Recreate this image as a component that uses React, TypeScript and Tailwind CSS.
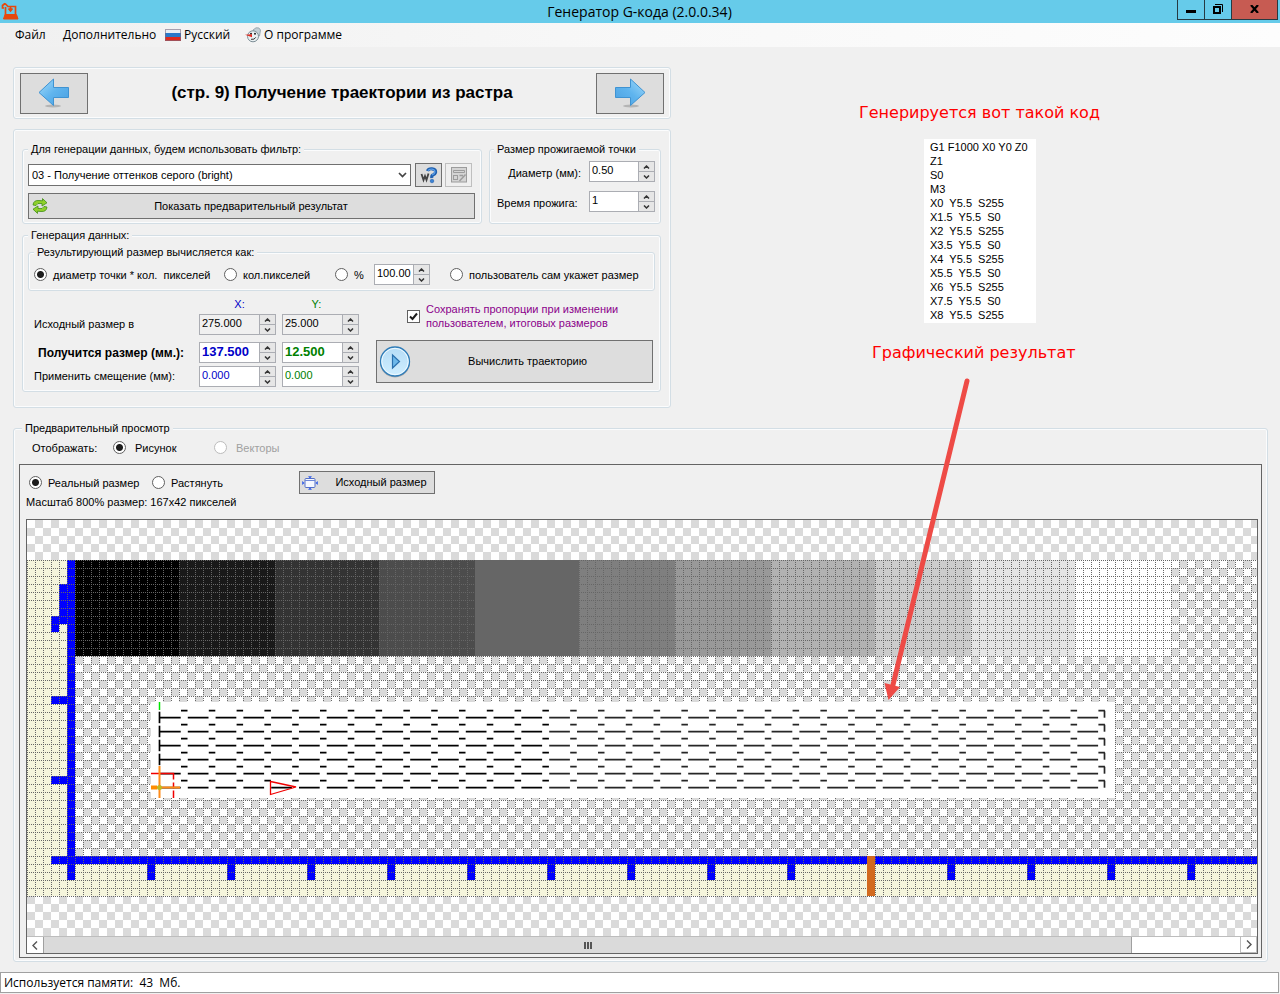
import { useId, useState } from 'react';
import type { ReactNode } from 'react';
import clsx from 'clsx';

const CODE_LINES = [
  'G1 F1000 X0 Y0 Z0',
  'Z1',
  'S0',
  'M3',
  'X0  Y5.5  S255',
  'X1.5  Y5.5  S0',
  'X2  Y5.5  S255',
  'X3.5  Y5.5  S0',
  'X4  Y5.5  S255',
  'X5.5  Y5.5  S0',
  'X6  Y5.5  S255',
  'X7.5  Y5.5  S0',
  'X8  Y5.5  S255',
];

// x, width, fill of each raster band
const BANDS: [number, number, string][] = [
  [48, 104, '#000000'],
  [152, 96, '#191919'],
  [248, 104, '#333333'],
  [352, 96, '#4c4c4c'],
  [448, 104, '#666666'],
  [552, 96, '#7f7f7f'],
  [648, 96, '#999999'],
  [744, 104, '#b2b2b2'],
  [848, 96, '#cccccc'],
  [944, 104, '#e5e5e5'],
  [1048, 96, '#ffffff'],
];

const BUTTON = 'border border-[#707070] bg-[#dddddd] hover:bg-[#e5f1fb]';

function GroupBox({
  title,
  className,
  legendClass = 'ml-[5px]',
  children,
}: {
  title: string;
  className?: string;
  legendClass?: string;
  children: ReactNode;
}) {
  return (
    <fieldset
      className={clsx(
        'min-w-0 rounded-[3px] border border-[#d3dee5] shadow-[inset_0_0_0_1px_#fbfcfd]',
        className,
      )}
    >
      <legend className={clsx('bg-[#f0f0f0] px-[3px] leading-[14px]', legendClass)}>{title}</legend>
      {children}
    </fieldset>
  );
}

function Spin({
  label,
  value,
  className,
  inputClass = 'bg-white',
}: {
  label: string;
  value: string;
  className?: string;
  inputClass?: string;
}) {
  const [text, setText] = useState(value);
  const decimals = value.split('.')[1]?.length ?? 0;
  const step = (delta: number) => setText((Number(text) + delta).toFixed(decimals));

  return (
    <div className={clsx('flex h-[21px] border border-[#abadb3]', className)}>
      <input
        type="text"
        aria-label={label}
        value={text}
        onChange={(e) => setText(e.target.value)}
        className={clsx('w-0 min-w-0 flex-1 pb-[2px] pl-[2px] outline-none', inputClass)}
      />
      <div className="flex w-4 flex-col bg-[#abadb3] pl-px">
        <button
          aria-label={`${label}: больше`}
          onClick={() => step(1)}
          className="flex flex-1 items-center justify-center border-b border-[#abadb3] bg-[#e6e6e6]"
        >
          <svg width="7" height="4" viewBox="0 0 7 4" fill="none" stroke="#333" strokeWidth="1.5">
            <path d="M1 3.5 3.5 1 6 3.5" />
          </svg>
        </button>
        <button
          aria-label={`${label}: меньше`}
          onClick={() => step(-1)}
          className="flex flex-1 items-center justify-center bg-[#e6e6e6]"
        >
          <svg width="7" height="4" viewBox="0 0 7 4" fill="none" stroke="#333" strokeWidth="1.5">
            <path d="M1 .5 3.5 3 6 .5" />
          </svg>
        </button>
      </div>
    </div>
  );
}

function Radio({
  name,
  label,
  checked,
  disabled,
  className,
  labelClass = 'pl-[6px]',
}: {
  name: string;
  label: string;
  checked?: boolean;
  disabled?: boolean;
  className?: string;
  labelClass?: string;
}) {
  const id = useId();
  return (
    <div className={clsx('flex shrink-0 items-center', className)}>
      <input
        id={id}
        type="radio"
        name={name}
        defaultChecked={checked}
        disabled={disabled}
        className="h-[13px] w-[13px] shrink-0 appearance-none rounded-full border border-[#606060] bg-white checked:bg-[radial-gradient(circle,#1c1c1c_0_3px,#ffffff_4px)] disabled:border-[#bcbcbc]"
      />
      <label
        htmlFor={id}
        className={clsx('pt-px whitespace-pre', labelClass, disabled && 'text-[#a0a0a0]')}
      >
        {label}
      </label>
    </div>
  );
}

function AppIcon() {
  return (
    <svg width="18" height="18" viewBox="0 0 18 18" fill="none" stroke="#e8480c">
      <path d="M3 6H1.5V3.5L4 1.5M4 1.5 7 4.5H14.500V12M4.500 5V13" strokeWidth="1.7" />
      <path d="M9.500 4V9M7.500 6.500l2 2.500 2-2.500" strokeWidth="1.700" />
      <path d="M4 12.500H15.500L17 17H2.500Z" fill="#e8480c" />
    </svg>
  );
}

function FlagIcon() {
  return (
    <svg width="16" height="12" viewBox="0 0 16 12">
      <rect width="16" height="4" fill="#e9eef3" />
      <rect y="4" width="16" height="4" fill="#2a78c8" />
      <rect y="8" width="16" height="4" fill="#dd2a1e" />
      <rect x=".5" y=".5" width="15" height="11" fill="none" stroke="#7a6a80" strokeOpacity=".6" />
    </svg>
  );
}

function SnowmanIcon() {
  return (
    <svg width="16" height="16" viewBox="0 0 16 16">
      <path d="M8 3 11 .8Q14.500 0 15.500 3L14.500 9 12 9Z" fill="#c3d0d6" stroke="#8b9ba3" strokeWidth=".8" />
      <circle cx="8" cy="9.300" r="5.500" fill="#eaf0f2" stroke="#7d8e96" />
      <circle cx="6" cy="6.800" r="1" fill="#222" />
      <circle cx="10" cy="6.800" r="1" fill="#222" />
      <path d="M0 7.700 7 7.300V10.300Z" fill="#e02a20" />
      <path d="M6 12.300Q9.500 13 10.800 10.300" fill="none" stroke="#333" />
    </svg>
  );
}

function BigArrow({ flip }: { flip?: boolean }) {
  return (
    <svg width="32" height="30" viewBox="0 0 32 30" className={flip ? '-scale-x-100' : undefined}>
      <defs>
        <linearGradient id="arrowFill" x1="0" y1="0" x2="1" y2="1">
          <stop offset="0" stopColor="#a5dcfa" />
          <stop offset=".5" stopColor="#5fb4ee" />
          <stop offset="1" stopColor="#4a9fe0" />
        </linearGradient>
      </defs>
      <ellipse cx="15" cy="28" rx="8" ry="1.500" fill="#b4b4b4" />
      <path
        d="M1 14.500 15.500 1V9.500H30.500V19.500H15.500V27.500Z"
        fill="url(#arrowFill)"
        stroke="#3f93d2"
        strokeLinejoin="round"
      />
    </svg>
  );
}

function RefreshIcon() {
  return (
    <svg width="16" height="16" viewBox="0 0 16 16" fill="#8fd02a" stroke="#3f8f14" strokeWidth=".8">
      <path d="M1 7Q1.500 2 7 2.500L10.500 2.800V.6L15 4.800 10 8V5.500Q5 4.500 4 7.500Z" />
      <path d="M15 9Q14.500 14 9 13.500L5.500 13.200V15.400L1 11.200 6 8V10.500Q11 11.500 12 8.500Z" />
    </svg>
  );
}

function HelpIcon() {
  return (
    <svg width="18" height="17" viewBox="0 0 18 17" fill="none">
      <path d="M1.500 7 3.500 13 5 9 6.500 13 8.500 6.500" stroke="#444" strokeWidth="1.800" />
      <path
        d="M7.500 4Q8.500 1.500 12 1.800 16 2.200 15.500 5.500 15 7.500 12.500 8.200 11.500 8.800 11.800 11"
        stroke="#1f5fae"
        strokeWidth="3.200"
      />
      <path
        d="M8 3.800Q9 1.900 12 2.200 15.200 2.600 14.900 5.300 14.500 7 12 8"
        stroke="#5fa2ea"
        strokeWidth="1.200"
      />
      <circle cx="12" cy="14" r="1.800" fill="#3c82d4" stroke="#1f5fae" strokeWidth=".6" />
    </svg>
  );
}

function FormIcon() {
  return (
    <svg width="16" height="16" viewBox="0 0 16 16" fill="none" stroke="#9c9c9c">
      <rect x=".5" y=".5" width="15" height="14.500" fill="#d4d4d4" />
      <path d="M2.500 3.500H13.500V5.500H2.500Z" />
      <rect x="2.500" y="8.500" width="4" height="4" />
      <path d="M8.500 8.500H12M8.500 14 14.500 7.500" strokeWidth="1.500" />
    </svg>
  );
}

function PlayIcon() {
  return (
    <svg width="32" height="32" viewBox="0 0 32 32">
      <defs>
        <linearGradient id="playFill" x1="0" y1="0" x2="0" y2="1">
          <stop offset="0" stopColor="#b5dcf6" />
          <stop offset="1" stopColor="#cfeeff" />
        </linearGradient>
      </defs>
      <circle cx="16" cy="16.500" r="15" fill="#a9a9a9" />
      <circle cx="16" cy="15.500" r="14.500" fill="url(#playFill)" stroke="#2f7cb8" strokeWidth="1.300" />
      <circle cx="16" cy="15.500" r="13.200" fill="none" stroke="#eef9ff" />
      <path d="M13.500 9 20.500 15.500 13.500 22Z" fill="#6db8ea" stroke="#2a70ae" strokeWidth="1.200" />
    </svg>
  );
}

function FitIcon() {
  return (
    <svg width="16" height="14" viewBox="0 0 16 14">
      <rect x="3" y="2.500" width="10" height="9" rx="1" fill="#f4f7ff" stroke="#5470c8" />
      <path d="M3 4.500H13" stroke="#6e88d8" />
      <path
        d="M8 2.500 6 .3H10ZM8 11.500 6 13.700H10ZM2.500 7 .2 5V9ZM13.500 7 15.800 5V9Z"
        fill="#2f5bea"
      />
    </svg>
  );
}

function Toolpath() {
  const columns = Array.from({ length: 34 }, (_, i) => i);
  const rows = [0, 1, 2, 3, 4, 5];
  return (
    <g fill="none">
      <rect x="124" y="182" width="964" height="96" fill="#fff" />
      {rows.map((row) => {
        const y = 190.7 + row * 14;
        return (
          <g key={row} strokeWidth="1.7">
            {columns.map((col) => {
              const x = 133 + col * 27.8;
              const stroke = col < 14 ? '#000' : '#262626';
              return (
                <path
                  key={col}
                  stroke={stroke}
                  d={`M${x + 21} ${y}h6.500M${x} ${y + 7}h20.700`}
                />
              );
            })}
            <path stroke="#262626" d={`M1077.500 ${y}v7`} />
            {row < 4 && <path stroke="#000" d={`M132.500 ${y + 1}v11.500`} />}
          </g>
        );
      })}
      <path stroke="#00e400" strokeWidth="1.500" d="M132.500 182v8" />
      <path stroke="#f00000" strokeWidth="1.500" d="M124 253.500h22.500v6m0 3v6m0 2v7.500" />
      <path stroke="#ff8c1a" strokeWidth="2" d="M132.500 246v32M124 267.500h29" />
      <path stroke="#ff8c00" strokeWidth="4" d="M124 267.500h6" />
      <circle cx="132.500" cy="267.500" r="2.500" fill="#c0b820" />
      <path stroke="#f00000" strokeWidth="1.300" d="M243.500 261.500 269 267 243.500 274.500Z" />
    </g>
  );
}

function Raster() {
  return (
    <svg width="100%" height="416" className="block">
      <defs>
        <pattern id="checker" width="16" height="16" patternUnits="userSpaceOnUse">
          <rect width="16" height="16" fill="#fff" />
          <path d="M8 0h8v8h-8zM0 8h8v8H0z" fill="#dadada" />
        </pattern>
        <pattern id="dots" width="8" height="8" patternUnits="userSpaceOnUse">
          <path
            d="M0 0h1v1H0zM2 0h1v1H2zM4 0h1v1H4zM6 0h1v1H6zM0 2h1v1H0zM0 4h1v1H0zM0 6h1v1H0z"
            fill="#666"
          />
        </pattern>
      </defs>
      <rect width="100%" height="416" fill="url(#checker)" />
      <rect y="40" width="40" height="336" fill="#f5f5dc" />
      <rect y="344" width="100%" height="32" fill="#f5f5dc" />
      {BANDS.map(([x, width, fill]) => (
        <rect key={x} x={x} y="40" width={width} height="96" fill={fill} />
      ))}
      <g fill="#0000ff">
        <path d="M40 40h8v320h-8zM32 64h8v40h-8zM24 96h8v16h-8zM24 176h16v8H24zM24 256h16v8H24z" />
        <rect x="24" y="336" width="100%" height="8" />
        {Array.from({ length: 30 }, (_, i) => (
          <rect key={i} x={120 + i * 80} y="344" width="8" height="16" />
        ))}
      </g>
      <rect y="40" width="100%" height="337" fill="url(#dots)" />
      <rect x="840" y="336" width="8" height="40" fill="#d2691e" />
      <Toolpath />
    </svg>
  );
}

function TitleBar() {
  return (
    <header className="flex h-[23px] shrink-0 items-start bg-[#66cbea]">
      <div className="flex w-[102px] pt-[2px] pl-px">
        <AppIcon />
      </div>
      <h1 className="flex-1 text-center font-['Open_Sans','Noto_Sans',sans-serif] text-[14px] leading-[23px]">
        Генератор G-кода (2.0.0.34)
      </h1>
      <div className="mr-[2px] flex h-5 border-b border-l border-[#263a42]">
        <button aria-label="Свернуть" className="flex w-[26px] justify-center pt-[10px]">
          <svg width="10" height="3">
            <rect width="10" height="3" />
          </svg>
        </button>
        <button
          aria-label="Восстановить"
          className="flex w-[27px] justify-center border-l border-[#263a42] pt-1"
        >
          <svg width="10" height="10" fill="none" stroke="#000">
            <rect x="1" y="3" width="6" height="6" strokeWidth="2" />
            <path d="M2 .5H9.500V8" />
          </svg>
        </button>
        <button
          aria-label="Закрыть"
          className="flex w-[47px] justify-center border-x border-[#263a42] bg-[#c75b52] pt-[5px]"
        >
          <svg width="9" height="8" viewBox="0 0 9 8" stroke="#000" strokeWidth="2.200">
            <path d="M1 0 8 8M8 0 1 8" />
          </svg>
        </button>
      </div>
    </header>
  );
}

function MenuBar() {
  return (
    <nav className="flex h-6 shrink-0 items-center bg-linear-to-r from-[#f0f0f0] via-[#f8f8f8] to-[#fdfdfd] pl-[15px] font-['Open_Sans','Noto_Sans',sans-serif] text-[12px]">
      <button className="w-12 text-left">Файл</button>
      <button className="w-[102px] text-left">Дополнительно</button>
      <button className="flex w-20 items-center gap-[3px]">
        <FlagIcon />
        Русский
      </button>
      <button className="flex items-center gap-[3px]">
        <SnowmanIcon />
        О программе
      </button>
    </nav>
  );
}

function PageHeader() {
  return (
    <div className="flex h-[52px] items-center justify-between rounded-[3px] border border-[#d3dee5] px-[6px] shadow-[inset_0_0_0_1px_#fbfcfd]">
      <button
        aria-label="Назад"
        className={clsx('flex h-[41px] w-[68px] items-center justify-center', BUTTON)}
      >
        <BigArrow />
      </button>
      <h2 className="text-[17px] font-bold">(стр. 9) Получение траектории из растра</h2>
      <button
        aria-label="Вперёд"
        className={clsx('flex h-[41px] w-[68px] items-center justify-center', BUTTON)}
      >
        <BigArrow flip />
      </button>
    </div>
  );
}

function FilterBox() {
  return (
    <GroupBox title="Для генерации данных, будем использовать фильтр:" className="flex-1 pb-1">
      <div className="flex items-center pt-[7px] pr-[9px] pl-[5px]">
        <div className="relative flex-1">
          <select
            aria-label="Фильтр"
            className="block h-[22px] w-full appearance-none border border-[#707070] bg-white pl-[3px]"
          >
            <option>03 - Получение оттенков серого (bright)</option>
          </select>
          <svg
            className="pointer-events-none absolute top-2 right-1"
            width="9"
            height="6"
            fill="none"
            stroke="#444"
            strokeWidth="1.700"
          >
            <path d="M1 1 4.500 4.500 8 1" />
          </svg>
        </div>
        <button
          aria-label="Справка по фильтру"
          className={clsx('ml-1 flex h-6 w-[27px] items-center justify-center', BUTTON)}
        >
          <HelpIcon />
        </button>
        <button
          aria-label="Настройки фильтра"
          disabled
          className="ml-[3px] flex h-6 w-[27px] items-center justify-center border border-[#bfbfbf] bg-[#efefef]"
        >
          <FormIcon />
        </button>
      </div>
      <div className="mt-[6px] flex pr-[6px] pl-[5px]">
        <button className={clsx('flex h-[26px] flex-1 items-center pl-[3px]', BUTTON)}>
          <RefreshIcon />
          <span className="flex-1 pr-5 text-center">Показать предварительный результат</span>
        </button>
      </div>
    </GroupBox>
  );
}

function DotBox() {
  return (
    <GroupBox
      title="Размер прожигаемой точки"
      className="w-[172px] pr-[5px]"
      legendClass="ml-1"
    >
      <div className="flex items-center justify-end gap-2 pt-[5px]">
        <span className="pt-1">Диаметр (мм):</span>
        <Spin label="Диаметр (мм)" value="0.50" className="w-[66px]" />
      </div>
      <div className="flex items-center justify-between pt-[9px] pl-[7px]">
        <span className="pt-1">Время прожига:</span>
        <Spin label="Время прожига" value="1" className="w-[66px]" />
      </div>
    </GroupBox>
  );
}

function SizeGrid() {
  return (
    <div className="w-[325px] pt-[6px]">
      <div className="grid grid-cols-[159px_77px_77px] gap-x-[6px] leading-[14px]">
        <span />
        <span className="pl-1 text-center text-[#0000c8]">X:</span>
        <span className="pr-2 text-center text-[#008000]">Y:</span>
      </div>
      <div className="mt-[3px] grid grid-cols-[159px_77px_77px] items-center gap-x-[6px]">
        <span>Исходный размер в</span>
        <Spin label="Исходный размер X" value="275.000" inputClass="bg-[#f0f0f0]" />
        <Spin label="Исходный размер Y" value="25.000" inputClass="bg-[#f0f0f0]" />
      </div>
      <div className="mt-[7px] grid grid-cols-[159px_77px_77px] items-center gap-x-[6px]">
        <span className="pl-1 text-[12px] font-bold whitespace-nowrap">Получится размер (мм.):</span>
        <Spin
          label="Размер X"
          value="137.500"
          inputClass="bg-white text-[13px] font-bold text-[#0000c8]"
        />
        <Spin
          label="Размер Y"
          value="12.500"
          inputClass="bg-white text-[13px] font-bold text-[#008000]"
        />
      </div>
      <div className="mt-[3px] grid grid-cols-[159px_77px_77px] items-center gap-x-[6px]">
        <span>Применить смещение (мм):</span>
        <Spin label="Смещение X" value="0.000" inputClass="bg-white text-[#0000c8]" />
        <Spin label="Смещение Y" value="0.000" inputClass="bg-white text-[#008000]" />
      </div>
    </div>
  );
}

function GenerationBox() {
  return (
    <GroupBox title="Генерация данных:" className="px-[5px] pt-[3px] pb-1" legendClass="ml-0">
      <GroupBox
        title="Результирующий размер вычисляется как:"
        className="pt-[5px] pb-[5px] pl-[5px]"
        legendClass="ml-0"
      >
        <div className="flex items-center">
          <Radio
            name="calc"
            label="диаметр точки * кол.  пикселей"
            checked
            className="w-[190px]"
          />
          <Radio name="calc" label="кол.пикселей" className="w-[111px]" />
          <Radio name="calc" label="%" className="w-[39px]" />
          <Spin label="Процент" value="100.00" className="w-[56px]" />
          <Radio name="calc" label="пользователь сам укажет размер" className="ml-5" />
        </div>
      </GroupBox>
      <div className="flex gap-[17px] pl-[6px]">
        <SizeGrid />
        <div className="flex flex-1 flex-col pt-[11px] pr-[2px]">
          <div className="flex items-center pl-[31px] leading-[14px] text-[#8b008b]">
            <span className="relative h-[13px] w-[13px]">
              <input
                id="keep-ratio"
                type="checkbox"
                defaultChecked
                className="peer block h-[13px] w-[13px] appearance-none border border-[#606060] bg-white"
              />
              <svg
                className="pointer-events-none absolute inset-0 hidden peer-checked:block"
                width="13"
                height="13"
                fill="none"
                stroke="#1c1c1c"
                strokeWidth="2"
              >
                <path d="M3 6.500 5.500 9 10 3.500" />
              </svg>
            </span>
            <label htmlFor="keep-ratio" className="pl-[6px] whitespace-nowrap">
              Сохранять пропорции при изменении
              <br />
              пользователем, итоговых размеров
            </label>
          </div>
          <button className={clsx('mt-[10px] flex h-[43px] items-center pl-[2px]', BUTTON)}>
            <PlayIcon />
            <span className="flex-1 pr-[8px] text-center">Вычислить траекторию</span>
          </button>
        </div>
      </div>
    </GroupBox>
  );
}

function Notes() {
  return (
    <aside className="relative flex-1 pt-9 pl-[188px] font-['DejaVu_Sans',sans-serif] text-[16px] text-[#ff0000]">
      <p className="leading-5">Генерируется вот такой код</p>
      <pre className="mt-4 ml-[65px] w-[112px] bg-white py-px pl-[6px] font-['Liberation_Sans',Arial,sans-serif] text-[11px] leading-[14px] text-black">
        {CODE_LINES.join('\n')}
      </pre>
      <p className="mt-5 ml-[13px] leading-5">Графический результат</p>
      <svg
        className="pointer-events-none absolute top-[311px] left-[209px] z-10"
        width="92"
        height="324"
        viewBox="0 0 92 324"
      >
        <path d="M87 3 12 311" stroke="#ee4b46" strokeWidth="5" strokeLinecap="round" />
        <path d="M4.500 305 20 309 8.500 322Z" fill="#ee4b46" />
      </svg>
    </aside>
  );
}

function ScrollBar() {
  return (
    <div className="flex h-[17px] border-t border-[#bdbdbd] bg-white">
      <button
        aria-label="Прокрутить влево"
        className="flex w-4 items-center justify-center"
      >
        <svg width="6" height="9" fill="none" stroke="#555" strokeWidth="1.400">
          <path d="M5 .5 1 4.500 5 8.500" />
        </svg>
      </button>
      <div className="flex-1">
        <div className="flex h-full w-[91%] items-center justify-center gap-px border-x border-[#a0a0a0] bg-[#dadada]">
          <span className="h-[7px] w-[2px] bg-[#555]" />
          <span className="h-[7px] w-[2px] bg-[#555]" />
          <span className="h-[7px] w-[2px] bg-[#555]" />
        </div>
      </div>
      <button
        aria-label="Прокрутить вправо"
        className="flex w-[17px] items-center justify-center border border-t-0 border-[#bdbdbd]"
      >
        <svg width="6" height="9" fill="none" stroke="#555" strokeWidth="1.400">
          <path d="M1 .5 5 4.500 1 8.500" />
        </svg>
      </button>
    </div>
  );
}

function Preview() {
  return (
    <GroupBox
      title="Предварительный просмотр"
      className="mt-[13px] px-[5px] pb-[3px]"
      legendClass="ml-[3px]"
    >
      <div className="flex h-[21px] items-end pl-[13px] leading-4">
        <span className="w-[81px]">Отображать:</span>
        <Radio
          name="show"
          label="Рисунок"
          checked
          className="w-[101px]"
          labelClass="pl-[9px]"
        />
        <Radio name="show" label="Векторы" disabled labelClass="pl-[9px]" />
      </div>
      <div className="mt-2 border border-[#646464] pt-[6px] pr-[3px] pb-[3px] pl-[6px]">
        <div className="flex h-[23px] items-center pl-[3px]">
          <Radio name="scale" label="Реальный размер" checked className="w-[123px]" />
          <Radio name="scale" label="Растянуть" className="w-[147px]" />
          <button className={clsx('flex h-[23px] w-[136px] items-center pl-[2px]', BUTTON)}>
            <FitIcon />
            <span className="flex-1 pl-[10px] text-center">Исходный размер</span>
          </button>
        </div>
        <p className="mt-px leading-[14px]">Масштаб 800% размер: 167x42 пикселей</p>
        <div className="mt-[10px] border border-[#646464]">
          <Raster />
          <ScrollBar />
        </div>
      </div>
    </GroupBox>
  );
}

export default function App() {
  return (
    <div className="flex min-h-screen flex-col bg-[#f0f0f0] font-['Liberation_Sans',Arial,sans-serif] text-[11px] text-black">
      <TitleBar />
      <MenuBar />
      <main className="pt-5 pr-3 pl-[13px]">
        <div className="flex">
          <div className="w-[658px] shrink-0">
            <PageHeader />
            <div className="mt-[10px] rounded-[3px] border border-[#d3dee5] pt-3 pr-[9px] pb-[15px] pl-2 shadow-[inset_0_0_0_1px_#fbfcfd]">
              <div className="mb-1 flex gap-[7px]">
                <FilterBox />
                <DotBox />
              </div>
              <GenerationBox />
            </div>
          </div>
          <Notes />
        </div>
        <Preview />
      </main>
      <footer className="mt-[10px] mr-px flex h-[21px] items-center border border-[#a0a0a0] bg-white pl-[3px] font-['Open_Sans','Noto_Sans',sans-serif] text-[12px] whitespace-pre">
        Используется памяти:  43  Мб.
      </footer>
    </div>
  );
}
